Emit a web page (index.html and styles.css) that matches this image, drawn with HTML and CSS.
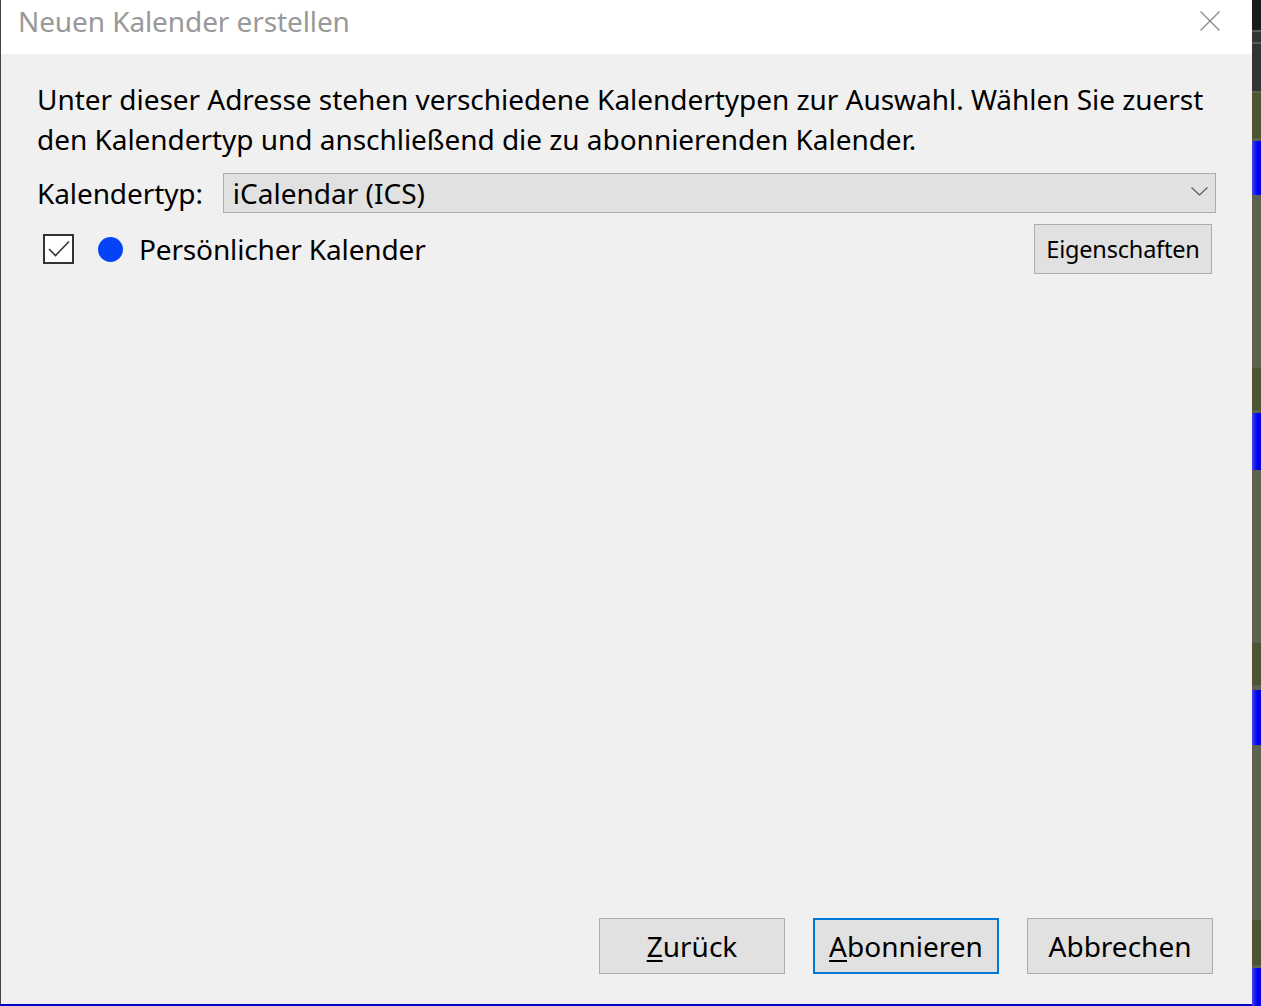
FILE: index.html
```html
<!DOCTYPE html>
<html lang="de">
<head>
    <meta charset="UTF-8">
    <title>Neuen Kalender erstellen</title>
    <link rel="stylesheet" href="styles.css">
</head>
<body>
    <div class="screen">
        <div class="desk-left"></div>

        <!-- Dialog window -->
        <div class="dialog">
            <div class="titlebar">
                <span class="title">Neuen Kalender erstellen</span>
                <span class="close">
                    <svg width="20" height="20" viewBox="0 0 20 20">
                        <path d="M0.5 0.5 L19.5 19.5 M19.5 0.5 L0.5 19.5" stroke="#8a8a8a" stroke-width="1.3" fill="none"/>
                    </svg>
                </span>
            </div>

            <div class="content">
                <p class="intro">Unter dieser Adresse stehen verschiedene Kalendertypen zur Auswahl. Wählen Sie zuerst den Kalendertyp und anschließend die zu abonnierenden Kalender.</p>

                <div class="type-row">
                    <span class="type-label">Kalendertyp:</span>
                    <div class="select">
                        <span>iCalendar (ICS)</span>
                        <svg class="chevron" width="17" height="9" viewBox="0 0 17 9">
                            <path d="M0.5 0.5 L8.5 8 L16.5 0.5" stroke="#555" stroke-width="1.1" fill="none"/>
                        </svg>
                    </div>
                </div>

                <div class="cal-row">
                    <span class="checkbox">
                        <svg width="22" height="18" viewBox="0 0 22 18">
                            <path d="M1 9 L7.5 15.5 L21 1.5" stroke="#333" stroke-width="1.6" fill="none"/>
                        </svg>
                    </span>
                    <span class="dot"></span>
                    <span class="cal-name">Persönlicher Kalender</span>
                    <button class="btn btn-small">Eigenschaften</button>
                </div>

                <div class="actions">
                    <button class="btn"><u>Z</u>urück</button>
                    <button class="btn btn-default"><u>A</u>bonnieren</button>
                    <button class="btn">Abbrechen</button>
                </div>
            </div>
        </div>

        <!-- desktop behind the dialog, right side -->
        <div class="desk-right">
            <div class="band dark" style="height:30px"></div>
            <div class="band line" style="height:2px"></div>
            <div class="band mid" style="height:10px"></div>
            <div class="band line" style="height:2px"></div>
            <div class="band mid" style="height:47px"></div>
            <div class="band gray" style="height:2px"></div>
            <div class="band olive" style="height:45px"></div>
            <div class="band gray" style="height:3px"></div>
            <div class="band blue" style="height:54px"></div>
            <div class="band gray" style="height:173px"></div>
            <div class="band olive" style="height:42px"></div>
            <div class="band gray" style="height:3px"></div>
            <div class="band blue" style="height:57px"></div>
            <div class="band gray" style="height:173px"></div>
            <div class="band olive" style="height:42px"></div>
            <div class="band gray" style="height:5px"></div>
            <div class="band blue" style="height:55px"></div>
            <div class="band gray" style="height:175px"></div>
            <div class="band olive" style="height:45px"></div>
            <div class="band gray" style="height:3px"></div>
            <div class="band blue" style="height:40px"></div>
        </div>
    </div>
    <div class="desk-bottom"></div>
</body>
</html>
```

FILE: styles.css
```css
body {
    margin: 0;
    background-color: #3c3c3c;
    font-family: "Noto Sans", "Open Sans", sans-serif;
    overflow: hidden;
}
.screen {
    display: flex;
    height: 1004px;
}
.desk-left {
    width: 1px;
    background-color: #444;
}
.desk-right {
    width: 9px;
    display: flex;
    flex-direction: column;
    background-color: #5f6150;
}
.band { flex-shrink: 0; }
.band.dark { background-color: #1a1a1a; }
.band.line { background-color: #5a5a5a; }
.band.mid { background-color: #343434; }
.band.gray { background-color: #5f6150; }
.band.olive { background-color: #4d5533; }
.band.blue { background: linear-gradient(to right, #4545f0, #0000e8 60%); }
.desk-bottom {
    height: 2px;
    background-color: #0000c8;
}

.dialog {
    width: 1251px;
    display: flex;
    flex-direction: column;
    background-color: #f0f0f0;
}
.titlebar {
    height: 54px;
    flex-shrink: 0;
    background-color: #fff;
    display: flex;
    align-items: center;
    justify-content: space-between;
    padding: 0 32px 13px 17px;
    box-sizing: border-box;
}
.title {
    font-size: 28px;
    letter-spacing: -0.1px;
    color: #999;
}
.close {
    display: flex;
}

.content {
    flex: 1;
    display: flex;
    flex-direction: column;
    padding: 25px 36px 30px 36px;
}
.intro {
    margin: 0;
    font-size: 28px;
    line-height: 40px;
    letter-spacing: -0.04px;
    color: #000;
}

.type-row {
    display: flex;
    align-items: center;
    margin-top: 14px;
    gap: 20px;
}
.type-label {
    font-size: 28px;
    letter-spacing: -0.1px;
}
.select {
    flex: 1;
    height: 40px;
    box-sizing: border-box;
    display: flex;
    align-items: center;
    justify-content: space-between;
    background-color: #e1e1e1;
    border: 1px solid #adadad;
    padding: 0 7px 0 9px;
    font-size: 28px;
}
.chevron {
    margin-top: -4px;
}

.cal-row {
    display: flex;
    align-items: center;
    margin-top: 11px;
    padding: 0 4px 0 6px;
}
.checkbox {
    width: 31px;
    height: 30px;
    box-sizing: border-box;
    border: 2px solid #333;
    background-color: #fff;
    display: flex;
    align-items: center;
    justify-content: center;
}
.dot {
    width: 25px;
    height: 25px;
    border-radius: 50%;
    background-color: #0443f7;
    margin-left: 24px;
}
.cal-name {
    font-size: 28px;
    letter-spacing: -0.15px;
    margin-left: 16px;
    flex: 1;
}

.btn {
    font-family: inherit;
    font-size: 28px;
    color: #000;
    background-color: #e1e1e1;
    border: 1px solid #adadad;
    width: 186px;
    height: 56px;
    padding: 0;
    cursor: pointer;
}
.btn u {
    text-underline-offset: 3px;
}
.btn-small {
    font-size: 23.5px;
    letter-spacing: -0.2px;
    width: 178px;
    height: 50px;
}
.btn-default {
    border: 2px solid #0078d7;
}

.actions {
    margin-top: auto;
    display: flex;
    justify-content: flex-end;
    gap: 28px;
    padding-right: 3px;
}
```
